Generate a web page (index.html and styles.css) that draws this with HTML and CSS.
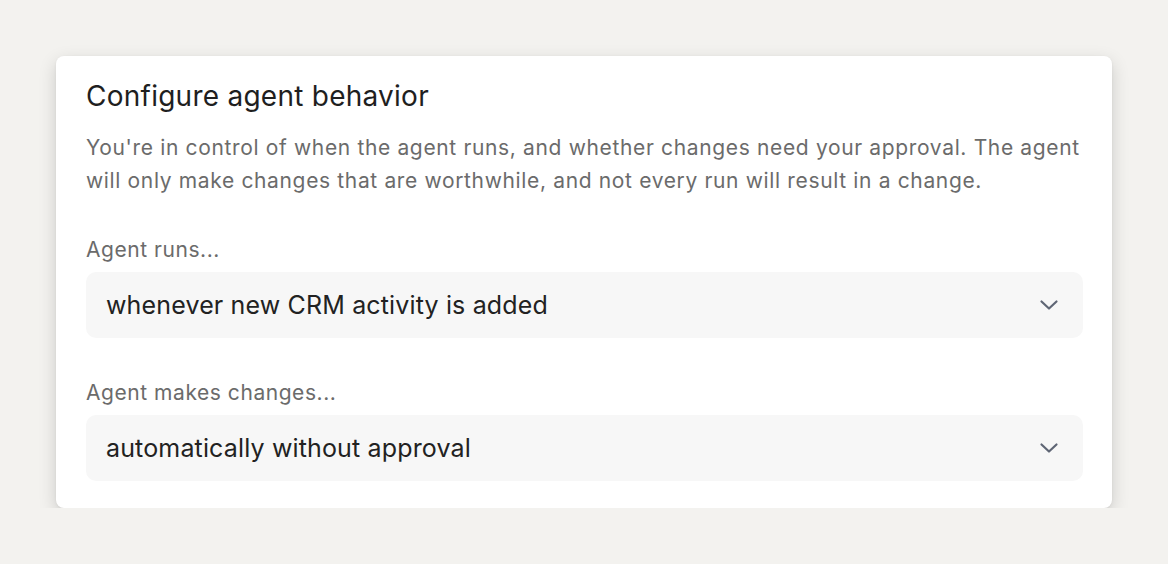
FILE: index.html
```html
<!DOCTYPE html>
<html>
<head>
<meta charset="utf-8">
<link rel="stylesheet" href="styles.css">
</head>
<body>
<div class="page">
  <section class="card">
    <h1 class="title">Configure agent behavior</h1>
    <p class="desc">You're in control of when the agent runs, and whether changes need your approval. The agent will only make changes that are worthwhile, and not every run will result in a change.</p>
    <div class="field">
      <div class="label">Agent runs...</div>
      <div class="select">
        <span class="value">whenever new CRM activity is added</span>
        <svg class="chev" width="20" height="20" viewBox="0 0 20 20" fill="none"><path d="M2.5 6.5L10 13.5L17.5 6.5" stroke="#5f6675" stroke-width="2.2" stroke-linecap="round" stroke-linejoin="round"/></svg>
      </div>
    </div>
    <div class="field second">
      <div class="label">Agent makes changes...</div>
      <div class="select">
        <span class="value">automatically without approval</span>
        <svg class="chev" width="20" height="20" viewBox="0 0 20 20" fill="none"><path d="M2.5 6.5L10 13.5L17.5 6.5" stroke="#5f6675" stroke-width="2.2" stroke-linecap="round" stroke-linejoin="round"/></svg>
      </div>
    </div>
  </section>
</div>
</body>
</html>
```

FILE: styles.css
```css
html, body {
  margin: 0;
  padding: 0;
  background: #f3f2ef;
  font-family: Inter, "Noto Sans", sans-serif;
}
.page {
  padding: 56px 56px 0 56px;
}
.card {
  background: #ffffff;
  border-radius: 8px;
  box-shadow: 0 6px 18px rgba(0, 0, 0, 0.16), 0 1px 3px rgba(0, 0, 0, 0.06);
  padding: 23px 29px 27px 30px;
  width: 997px;
}
.title {
  margin: 0;
  font-size: 28px;
  line-height: 34px;
  font-weight: 400;
  letter-spacing: 0.25px;
  color: #1f1f1f;
}
.desc {
  margin: 18px 0 0 0;
  font-size: 21px;
  line-height: 33px;
  letter-spacing: 0.65px;
  color: #6b6b6b;
}
.field {
  margin-top: 38px;
}
.field.second {
  margin-top: 40px;
}
.label {
  font-size: 21px;
  line-height: 30px;
  letter-spacing: 0.55px;
  color: #6b6b6b;
}
.select {
  margin-top: 7px;
  height: 66px;
  box-sizing: border-box;
  background: #f7f7f7;
  border-radius: 10px;
  display: flex;
  align-items: center;
  justify-content: space-between;
  padding: 0 24px 0 20px;
}
.value {
  font-size: 25px;
  letter-spacing: 0.15px;
  color: #222222;
}
.chev {
  display: block;
}
```
